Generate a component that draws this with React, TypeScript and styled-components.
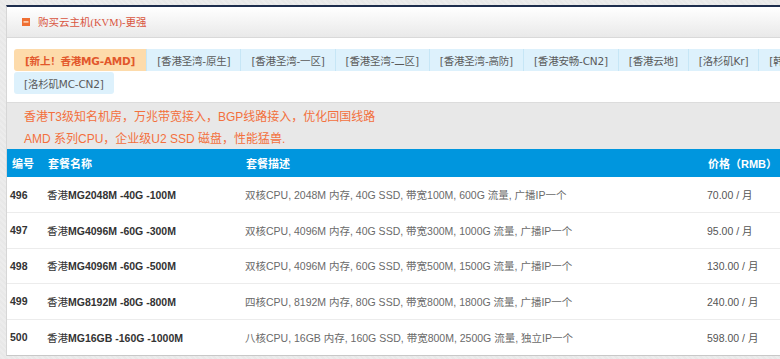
import React from "react";
import styled, { createGlobalStyle } from "styled-components";

const Global = createGlobalStyle`
  html, body { margin: 0; padding: 0; }
  body {
    background: repeating-linear-gradient(45deg, #e8e8e8 0 2px, #ececec 2px 4px);
    overflow: hidden;
    width: 780px;
    height: 359px;
    font-family: "Liberation Sans", "Noto Sans CJK SC", sans-serif;
  }
`;

const Page = styled.div`
  padding: 5px 0 0 6px;
  width: 774px;
  overflow: hidden;
`;

const Panel = styled.div`
  width: 800px;
  background: #fff;
  border-top: 2px solid #1e2d4d;
  border-left: 1px solid #d6d6d6;
  border-bottom: 1px solid #c8c8c8;
`;

const Header = styled.div`
  height: 30px;
  display: flex;
  align-items: center;
  gap: 8px;
  padding-left: 15px;
  background: linear-gradient(#ffffff, #e9e9e9);
  border-bottom: 1px solid #d9d9d9;
`;

const Title = styled.span`
  font-family: "Liberation Serif", "Noto Sans CJK SC", serif;
  font-size: 10.5px;
  color: #d9553f;
  margin-top: -1px;
`;

const TabArea = styled.div`
  padding: 11px 0 8px 7px;
`;

const Tabs = styled.div`
  width: 830px;
  display: flex;
  flex-wrap: wrap;
  row-gap: 1px;
`;

const Tab = styled.div<{ $hot?: boolean }>`
  height: 22px;
  box-sizing: border-box;
  display: flex;
  align-items: center;
  padding: 0 ${(p) => (p.$hot ? "11px" : "10px")};
  font-family: "DejaVu Sans", "Noto Sans CJK SC", sans-serif;
  font-size: 10.5px;
  letter-spacing: -0.2px;
  font-weight: ${(p) => (p.$hot ? 700 : 400)};
  color: ${(p) => (p.$hot ? "#e2572b" : "#5a5a5a")};
  background: ${(p) => (p.$hot ? "#fddbab" : "#ddf1fc")};
  border-right: 1px solid #c6e6f6;
  border-radius: ${(p) => (p.$hot ? "3px 0 0 3px" : "0")};
  &:last-child {
    border-radius: 3px;
    border-right: none;
  }
`;

const Notice = styled.div`
  background: #e8e8e8;
  border-top: 1px solid #dcdcdc;
  padding: 3px 0 0 17px;
  height: 43px;
  color: #f3703d;
  font-size: 12px;
  line-height: 22px;
  font-family: "Liberation Sans", "Noto Sans CJK SC", sans-serif;
`;

const Table = styled.table`
  width: 790px;
  border-collapse: collapse;
  table-layout: fixed;
`;

const HeadCell = styled.th<{ $w?: number }>`
  box-sizing: border-box;
  width: ${(p) => (p.$w ? `${p.$w}px` : "auto")};
  height: 28px;
  padding: 0 0 0 5px;
  background: #0096de;
  color: #fff;
  font-size: 11px;
  font-weight: 700;
  text-align: left;
  white-space: nowrap;
  font-family: "Liberation Sans", "Noto Sans CJK SC", sans-serif;
`;

const Row = styled.tr`
  border-bottom: 1px solid #ececec;
  &:last-child { border-bottom: none; }
`;

const Cell = styled.td<{ $tone?: "num" | "name" | "desc" | "price" }>`
  box-sizing: border-box;
  height: 35.5px;
  padding: 0 0 0 ${(p) => (p.$tone === "num" ? "3px" : "4px")};
  font-size: 10.5px;
  white-space: nowrap;
  font-weight: ${(p) => (p.$tone === "num" ? 700 : 400)};
  color: ${(p) =>
    p.$tone === "desc" ? "#6a6a6a" : p.$tone === "price" ? "#555" : "#333"};
  & b { font-weight: 700; color: #333; }
`;

const Icon = () => (
  <svg width="8" height="8" viewBox="0 0 8 8">
    <rect x="0" y="0" width="8" height="8" fill="#ef6f33" />
    <rect x="1.5" y="3.2" width="5" height="1.4" fill="#fde3cc" />
  </svg>
);

const tabs = [
  "[香港圣湾-原生]",
  "[香港圣湾-一区]",
  "[香港圣湾-二区]",
  "[香港圣湾-高防]",
  "[香港安畅-CN2]",
  "[香港云地]",
  "[洛杉矶Kr]",
  "[韩国首尔]",
  "[洛杉矶MC-CN2]",
];

const rows = [
  { id: 496, name: "MG2048M -40G -100M", desc: "双核CPU, 2048M 内存, 40G SSD, 带宽100M, 600G 流量, 广播IP一个", price: "70.00" },
  { id: 497, name: "MG4096M -60G -300M", desc: "双核CPU, 4096M 内存, 40G SSD, 带宽300M, 1000G 流量, 广播IP一个", price: "95.00" },
  { id: 498, name: "MG4096M -60G -500M", desc: "双核CPU, 4096M 内存, 60G SSD, 带宽500M, 1500G 流量, 广播IP一个", price: "130.00" },
  { id: 499, name: "MG8192M -80G -800M", desc: "四核CPU, 8192M 内存, 80G SSD, 带宽800M, 1800G 流量, 广播IP一个", price: "240.00" },
  { id: 500, name: "MG16GB -160G -1000M", desc: "八核CPU, 16GB 内存, 160G SSD, 带宽800M, 2500G 流量, 独立IP一个", price: "598.00" },
];

export default function App() {
  return (
    <>
      <Global />
      <Page>
        <Panel>
          <Header>
            <Icon />
            <Title>购买云主机(KVM)-更强</Title>
          </Header>
          <TabArea>
            <Tabs>
              <Tab $hot>[新上！香港MG-AMD]</Tab>
              {tabs.map((t) => (
                <Tab key={t}>{t}</Tab>
              ))}
            </Tabs>
          </TabArea>
          <Notice>
            <div>香港T3级知名机房，万兆带宽接入，BGP线路接入，优化回国线路</div>
            <div>AMD 系列CPU，企业级U2 SSD 磁盘，性能猛兽.</div>
          </Notice>
          <Table>
            <thead>
              <tr>
                <HeadCell $w={36}>编号</HeadCell>
                <HeadCell $w={198}>套餐名称</HeadCell>
                <HeadCell $w={462}>套餐描述</HeadCell>
                <HeadCell>价格（RMB）</HeadCell>
              </tr>
            </thead>
            <tbody>
              {rows.map((r) => (
                <Row key={r.id}>
                  <Cell $tone="num">{r.id}</Cell>
                  <Cell $tone="name">
                    香港<b>{r.name}</b>
                  </Cell>
                  <Cell $tone="desc">{r.desc}</Cell>
                  <Cell $tone="price">{r.price} / 月</Cell>
                </Row>
              ))}
            </tbody>
          </Table>
        </Panel>
      </Page>
    </>
  );
}
